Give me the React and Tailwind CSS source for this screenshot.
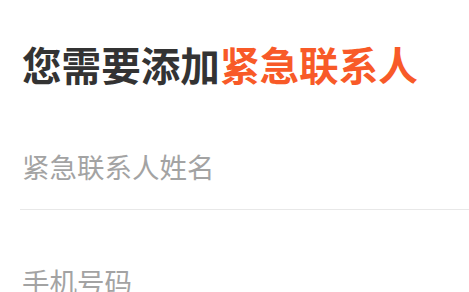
export default function App() {
  return (
    <div
      className="w-[469px] h-[292px] overflow-hidden bg-white"
      style={{ fontFamily: '"Noto Sans CJK SC", "Noto Sans", sans-serif' }}
    >
      <div className="pl-[20px]">
        <h1 className="pt-[40px] pl-[2px] text-[39.6px] leading-[48px] font-bold text-[#333333]">
          您需要添加<span className="text-[#f85a28]">紧急联系人</span>
        </h1>
        <div className="mt-[60px] h-[62px] border-b border-[#e8e8e8] pl-[2px] text-[27.5px] leading-[36px] text-[#a3a3a3]">
          紧急联系人姓名
        </div>
        <div className="pt-[53px] pl-[2px] text-[27.5px] leading-[36px] text-[#a3a3a3]">
          手机号码
        </div>
      </div>
    </div>
  );
}
